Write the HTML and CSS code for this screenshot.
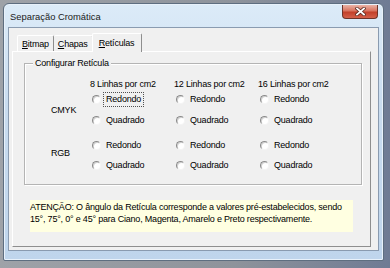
FILE: index.html
```html
<!DOCTYPE html>
<html lang="pt">
<head>
    <meta charset="UTF-8">
    <title>Separação Cromática</title>
    <link rel="stylesheet" href="styles.css">
</head>
<body>

<div class="window">
    <div class="titlebar">
        <span class="title">Separação Cromática</span>
        <div class="close-btn">
            <svg width="11" height="9" viewBox="0 0 11 9">
                <path d="M2 1.5 L9 7.5 M9 1.5 L2 7.5" stroke="#5a2a20" stroke-width="3.4" stroke-linecap="square"/>
                <path d="M2 1.5 L9 7.5 M9 1.5 L2 7.5" stroke="#ffffff" stroke-width="1.8" stroke-linecap="square"/>
            </svg>
        </div>
    </div>

    <div class="client">
        <div class="tabs">
            <span class="tab"><u>B</u>itmap</span>
            <span class="tab"><u>C</u>hapas</span>
            <span class="tab active"><u>R</u>etículas</span>
        </div>

        <div class="panel">
            <div class="group">
                <span class="group-label">Configurar Retícula</span>
                <div class="grid">
                    <span></span>
                    <span class="col-head">8 Linhas por cm2</span>
                    <span class="col-head">12 Linhas por cm2</span>
                    <span class="col-head">16 Linhas por cm2</span>

                    <span class="row-label cmyk">CMYK</span>
                    <label class="radio"><span class="dot"></span><span class="text focus">Redondo</span></label>
                    <label class="radio"><span class="dot"></span><span class="text">Redondo</span></label>
                    <label class="radio"><span class="dot"></span><span class="text">Redondo</span></label>

                    <label class="radio"><span class="dot"></span><span class="text">Quadrado</span></label>
                    <label class="radio"><span class="dot"></span><span class="text">Quadrado</span></label>
                    <label class="radio"><span class="dot"></span><span class="text">Quadrado</span></label>

                    <span class="row-label rgb">RGB</span>
                    <label class="radio"><span class="dot"></span><span class="text">Redondo</span></label>
                    <label class="radio"><span class="dot"></span><span class="text">Redondo</span></label>
                    <label class="radio"><span class="dot"></span><span class="text">Redondo</span></label>

                    <label class="radio"><span class="dot"></span><span class="text">Quadrado</span></label>
                    <label class="radio"><span class="dot"></span><span class="text">Quadrado</span></label>
                    <label class="radio"><span class="dot"></span><span class="text">Quadrado</span></label>
                </div>
            </div>

            <div class="note">
                ATENÇÃO: O ângulo da Retícula corresponde a valores pré-estabelecidos, sendo<br>
                15°, 75°, 0° e 45° para Ciano, Magenta, Amarelo e Preto respectivamente.
            </div>
        </div>
    </div>
</div>

</body>
</html>
```

FILE: styles.css
```css
body {
    margin: 0;
    height: 268px;
    background: linear-gradient(90deg, #9ea2a8 0%, #8e939b 60%, #6f7b94 100%);
    font-family: "Liberation Sans", Arial, sans-serif;
    font-size: 9px;
    letter-spacing: -0.2px;
    color: #000;
}

.window {
    box-sizing: border-box;
    margin: 3px 0 0 3px;
    width: 381px;
    height: 258px;
    border: 1px solid #5e6e80;
    border-radius: 6px 6px 2px 2px;
    background: linear-gradient(180deg, #dcebf8 0%, #c9dcef 40%, #bfd5ec 100%);
    box-shadow: inset 0 0 0 1px #e8f1fa;
}

.titlebar {
    display: flex;
    align-items: flex-start;
    height: 23px;
}

.title {
    padding: 7px 0 0 6px;
    font-size: 9.4px;
    letter-spacing: 0;
    color: #1a1a1a;
}

.close-btn {
    box-sizing: border-box;
    margin: 1px 5px 0 auto;
    width: 36px;
    height: 14px;
    border: 1px solid #6e3328;
    border-top: none;
    border-radius: 0 0 4px 4px;
    background: linear-gradient(180deg, #eab3a6 0%, #d9735e 45%, #c2402a 55%, #d4604a 100%);
    display: flex;
    align-items: center;
    justify-content: center;
}

.client {
    box-sizing: border-box;
    margin: 0 4px 0 4px;
    height: 224px;
    border: 1px solid #8a9bb0;
    background: #f0f0f0;
    padding: 5px 7px 0 3px;
}

.tabs {
    display: flex;
    align-items: flex-end;
    height: 18px;
    padding-left: 5px;
    position: relative;
    z-index: 1;
}

.tab {
    box-sizing: border-box;
    height: 16px;
    padding: 3px 4px 0 4px;
    border-left: 1px solid #ffffff;
    border-top: 1px solid #ffffff;
    border-right: 1px solid #8e8e8e;
    border-radius: 2px 2px 0 0;
}

.tab + .tab {
    border-left: none;
}

.tab.active {
    height: 19px;
    margin-bottom: -1px;
    padding: 4px 7px 0 6px;
    border-left: 1px solid #ffffff;
    margin-left: -1px;
    background: #f0f0f0;
}

.panel {
    box-sizing: border-box;
    height: 196px;
    border: 1px solid;
    border-color: #ffffff #8e8e8e #8e8e8e #ffffff;
    padding: 11px 8px 0 11px;
}

.group {
    position: relative;
    box-sizing: border-box;
    height: 122px;
    border: 1px solid #b4b4b4;
    box-shadow: inset 1px 1px 0 #ffffff, 1px 1px 0 #ffffff;
}

.group-label {
    position: absolute;
    top: -6px;
    left: 8px;
    padding: 0 2px;
    background: #f0f0f0;
}

.grid {
    display: grid;
    grid-template-columns: 67px 84px 84px 84px;
    grid-template-rows: 12px 18px 24px 26px 14px;
    align-items: center;
    padding-top: 14px;
}

.col-head {
    margin-left: -2px;
    white-space: nowrap;
}

.row-label {
    grid-column: 1;
    padding-left: 26px;
}

.cmyk {
    grid-row: 2 / span 2;
    margin-top: -3px;
}

.rgb {
    grid-row: 4 / span 2;
    margin-top: 2px;
}

.radio {
    display: flex;
    align-items: center;
    gap: 2px;
}

.dot {
    box-sizing: border-box;
    width: 9px;
    height: 9px;
    border-radius: 50%;
    border: 1px solid;
    border-color: #8a8a8a #f4f4f4 #f4f4f4 #8a8a8a;
    background: #ffffff;
    box-shadow: inset 1px 1px 0 #d0d0d0;
}

.text {
    padding: 1px 2px 2px 2px;
    border: 1px dotted transparent;
}

.text.focus {
    border-color: #505050;
}

.note {
    margin: 15px 0 0 6px;
    width: 323px;
    height: 32px;
    box-sizing: border-box;
    padding-top: 1px;
    background: #ffffe1;
    line-height: 12px;
}
```
